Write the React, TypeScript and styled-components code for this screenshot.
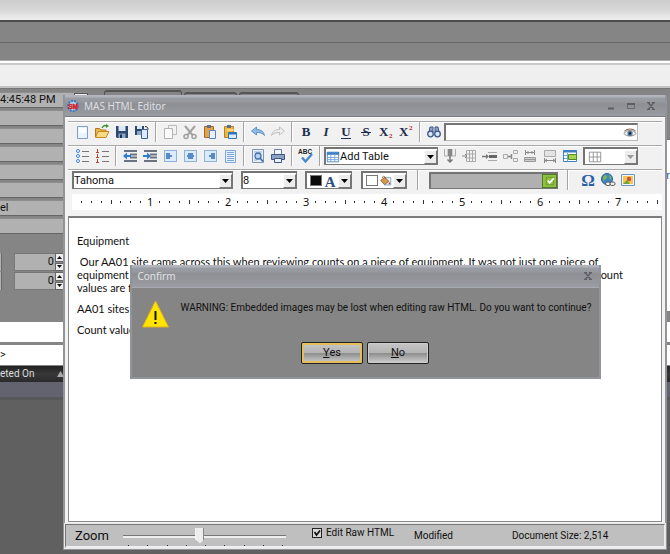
import React from "react";
import styled, { createGlobalStyle, css } from "styled-components";

const Global = createGlobalStyle`
  * { box-sizing: border-box; }
  html, body, #root { height: 100%; }
  body {
    margin: 0;
    overflow: hidden;
    font: 11px/16px Roboto, "Noto Sans", sans-serif;
    color: #111;
    background: #606060;
  }
  button, input, select { font: inherit; color: inherit; margin: 0; padding: 0; }
  p { margin: 0; }
`;

/* ---------- application behind the editor ---------- */

const Screen = styled.div`
  position: relative;
  height: 100%;
  min-height: 554px;
  overflow: hidden;
  display: flex;
  flex-direction: column;
  background: #858585;
`;
const TopStrip = styled.div`
  height: 22px;
  background: linear-gradient(#cdcdcd, #d8d8d8 50%, #efefef);
  border-bottom: 2px solid #4c4c4c;
`;
const GreyBand = styled.div<{ $line?: boolean }>`
  height: ${(p) => (p.$line ? 21 : 18)}px;
  background: #858585;
  border-bottom: 1px solid ${(p) => (p.$line ? "#646464" : "#b0b0b0")};
`;
const LightBand = styled.div`
  height: 27px;
  background: #efefef;
  border-top: 2px solid #fdfdfd;
  border-bottom: 2px solid #c3c3c3;
  box-shadow: inset 0 2px #c9c9c9;
`;
const Middle = styled.div`
  height: 234px;
  display: flex;
  gap: 16px;
  border-top: 1px solid #767676;
`;
const FieldColumn = styled.div`
  width: 88px;
  padding-top: 3px;
  display: flex;
  flex-direction: column;
  gap: 3px;
`;
const DarkField = styled.div`
  height: 15px;
  background: #b1b1b1;
  border-top: 1px solid #8e8e8e;
  box-shadow: 0 1px #666;
  line-height: 14px;
  white-space: nowrap;
  display: flex;
  justify-content: space-between;
`;
const DropTip = styled.span`
  width: 14px;
  background: #eee;
  border: 1px solid #555;
`;
const SpinRow = styled.div<{ $first?: boolean }>`
  margin-top: ${(p) => (p.$first ? 17 : 0)}px;
  height: 16px;
  display: grid;
  grid-template-columns: 2px 41px 10px;
`;
const SpinEdge = styled.span`
  background: #b1b1b1;
  border-right: 1px solid #6a6a6a;
`;
const SpinField = styled.input`
  width: 41px;
  margin-left: 12px;
  border: 1px solid #777;
  border-right: 0;
  background: #b1b1b1;
  text-align: right;
  padding-right: 1px;
`;
const SpinButtons = styled.span`
  width: 9px;
  margin-left: 12px;
  display: grid;
  grid-template-rows: 1fr 1fr;
  row-gap: 1px;
  button { background: #eee; border: 1px solid #666; display: grid; place-items: center; }
`;
const Behind = styled.div`
  flex: 1;
  display: flex;
  flex-direction: column;
`;
const Tabs = styled.div`
  height: 50px;
  display: flex;
  align-items: flex-start;
  gap: 2px;
  padding-top: 1px;
`;
const TabTop = styled.div<{ $w: number; $low?: boolean }>`
  width: ${(p) => p.$w}px;
  height: 20px;
  margin-top: ${(p) => (p.$low ? 2 : 0)}px;
  border: 2px solid #555;
  border-width: 2px 1px 1px;
  border-radius: 3px 3px 0 0;
`;
const WhitePanel = styled.div`
  height: 172px;
  background: #fff;
  border-top: 1px solid #777;
  text-align: right;
  color: #2b62a0;
  padding-top: 28px;
`;
const WhiteRow = styled.div`
  height: 20px;
  margin-bottom: 3px;
  background: #fff;
  line-height: 20px;
`;
const GridHead = styled.div`
  height: 16px;
  margin-top: -2px;
  padding-right: calc(100% - 64px);
  display: flex;
  align-items: center;
  justify-content: space-between;
  background: linear-gradient(#222, #383838 50%, #2a2a2a);
  color: #ddd;
  font-size: 10px;
`;
const GridRow = styled.div`
  height: 16px;
  background: #62636e;
  border-bottom: 1px solid #55565e;
`;
const GridRest = styled.div`
  flex: 1;
  background: #606060;
  border-top: 2px solid #585858;
`;

/* ---------- editor window ---------- */

const EditorWindow = styled.section`
  position: absolute;
  top: 95px;
  left: 63px;
  right: 3px;
  bottom: 4px;
  display: flex;
  flex-direction: column;
  background: #919499;
  border: 2px solid #919499;
  border-top: 0;
`;
const titleFill = css`
  background: linear-gradient(#b4b6bf 0, #b0b2bb 2px, #9b9da4 3px, #96989e 7px, #8d8f94 9px, #9b9da4 22px);
`;
const TitleBar = styled.header`
  ${titleFill}
  height: 22px;
  flex: none;
  display: flex;
  align-items: center;
  padding: 0 6px 0 1px;
  gap: 4px;
  color: #dedfe2;
  border-bottom: 1px solid #777a80;
`;
const WindowTitle = styled.h1`
  flex: 1;
  margin: 0;
  font: 400 10px/16px "Noto Sans", sans-serif;
`;
const CaptionButton = styled.button`
  width: 16px;
  height: 16px;
  flex: none;
  border: 0;
  background: none;
  display: grid;
  place-items: center;
`;
const Body = styled.div`
  flex: 1;
  min-height: 0;
  display: flex;
  flex-direction: column;
  background: #f3f3f3;
  border-top: 1px solid #fff;
  padding: 3px 3px 2px;
`;
const Toolbar = styled.div`
  height: 24px;
  flex: none;
  display: flex;
  align-items: center;
  padding: 0 0 3px 4px;
  border-top: 1px solid #a9a9a9;
  box-shadow: inset 0 1px #fff;
  background: #f1f1f1;
`;
const ToolButton = styled.button`
  width: 20px;
  height: 20px;
  flex: none;
  border: 0;
  background: none;
  display: grid;
  place-items: center;
`;
const Divider = styled.span`
  width: 2px;
  height: 20px;
  flex: none;
  margin: 0 3px;
  background: #a3a3a3;
  border-right: 1px solid #fff;
`;
const Gap = styled.span<{ $w: number }>`
  width: ${(p) => p.$w}px;
  flex: none;
`;
const sunken = css`
  border: 1px solid #b8b8b8;
  border-top: 2px solid #747474;
  border-left: 2px solid #747474;
  background: #fff;
`;
const SearchBox = styled.label`
  ${sunken}
  width: 194px;
  height: 18px;
  display: flex;
  align-items: center;
  input { flex: 1; min-width: 0; border: 0; background: none; outline: 0; }
`;
const Combo = styled.span<{ $w: number }>`
  ${sunken}
  border-right: 1px solid #777;
  border-bottom: 1px solid #777;
  width: ${(p) => p.$w}px;
  height: 18px;
  flex: none;
  display: flex;
  align-items: center;
  select {
    flex: 1;
    min-width: 0;
    height: 15px;
    line-height: 15px;
    border: 0;
    outline: 0;
    background: none;
    appearance: none;
    font-size: 11px;
  }
`;
const ComboArrow = styled.span`
  width: 13px;
  height: 14px;
  flex: none;
  background: #ececec;
  border: 1px solid #fff;
  border-right-color: #777;
  border-bottom-color: #777;
  display: grid;
  place-items: center;
`;
const ColourCombo = styled.button<{ $w: number }>`
  ${sunken}
  border-right: 1px solid #777;
  border-bottom: 1px solid #777;
  width: ${(p) => p.$w}px;
  height: 18px;
  flex: none;
  display: flex;
  align-items: center;
  gap: 1px;
  padding-left: 3px;
  ${ComboArrow} { margin-left: auto; }
`;
const Swatch = styled.span<{ $c: string }>`
  width: 12px;
  height: 11px;
  flex: none;
  background: ${(p) => p.$c};
  border: 1px solid #777;
`;
const Disabled = styled.div`
  ${sunken}
  border-right: 1px solid #777;
  border-bottom: 1px solid #777;
  background: #b0b0b0;
  width: 129px;
  height: 17px;
  display: flex;
  justify-content: flex-end;
  button { width: 15px; height: 14px; border: 1px solid #4f7c25; background: #8fc241; display: grid; place-items: center; }
`;
const Ruler = styled.div`
  height: 16px;
  flex: none;
  margin: 1px 0 6px 4px;
  padding-left: 5px;
  background: #fff;
  display: flex;
  overflow: hidden;
`;
const Inch = styled.div`
  width: 78px;
  flex: none;
  display: grid;
  grid-template-columns: repeat(8, 1fr);
  place-items: center;
  font: 11px/16px "Noto Sans", sans-serif;
`;
const Tick = styled.i<{ $tall: boolean }>`
  width: 1px;
  height: ${(p) => (p.$tall ? 4 : 2)}px;
  background: #333;
`;
const Page = styled.article`
  flex: 1;
  min-height: 0;
  padding: 16px 8px;
  background: #fff;
  border: 1px solid #8a8a8a;
  border-top: 2px solid #7c7c7c;
  font: 11px/13px Lato, "Noto Sans", sans-serif;
  color: #111;
`;
const Para = styled.p`
  margin-bottom: 8px;
`;
const SplitLine = styled.span`
  display: flex;
  justify-content: space-between;
  padding-right: 30px;
`;
const StatusBar = styled.footer`
  height: 24px;
  flex: none;
  display: grid;
  grid-template-columns: 57px 163px 17px 102px 98px 1fr;
  align-items: center;
  padding-left: 9px;
  background: #bfbfbf;
  border: 1px solid #777;
  border-right-color: #eee;
  border-bottom: 2px solid #eee;
  outline: 1px solid #e8e8e8;
  font-size: 10px;
`;
const ZoomLabel = styled.label`
  font-size: 13px;
  line-height: 18px;
`;
const ZoomTrack = styled.span`
  grid-column: 2;
  height: 20px;
  display: flex;
  flex-direction: column;
  justify-content: space-between;
`;
const Range = styled.input`
  appearance: none;
  width: 100%;
  height: 17px;
  margin: 2px 0 0 -9px;
  background: none;
  &::-webkit-slider-runnable-track {
    height: 3px;
    background: #777;
    border-bottom: 2px solid #eee;
  }
  &::-webkit-slider-thumb {
    appearance: none;
    width: 9px;
    height: 16px;
    margin-top: -7px;
    background: #ededed;
    border-left: 1px solid #fff;
    border-right: 1px solid #888;
    clip-path: polygon(0 0, 100% 0, 100% 75%, 50% 100%, 0 75%);
  }
`;
const Notches = styled.span`
  display: flex;
  justify-content: space-between;
  padding-right: 12px;
  margin-left: -4px;
  i { width: 1px; height: 1px; background: #333; }
`;
const Check = styled.label`
  grid-column: 4;
  display: flex;
  align-items: center;
  gap: 4px;
  margin-bottom: 5px;
  white-space: nowrap;
  input {
    appearance: none;
    width: 10px;
    height: 10px;
    border: 1px solid #222;
    background: #d8d8d8 url("data:image/svg+xml,%3Csvg xmlns='http://www.w3.org/2000/svg' viewBox='0 0 8 8'%3E%3Cpath d='M1.5 3l2 3L7 1.5' fill='none' stroke='%23111' stroke-width='1.7'/%3E%3C/svg%3E");
  }
`;

/* ---------- confirm dialog ---------- */

const Overlay = styled.div`
  position: absolute;
  top: 170px;
  left: 0;
  right: 0;
  display: flex;
  justify-content: center;
`;
const Dialog = styled.div`
  width: 471px;
  background: #858585;
  border: 2px solid #919499;
  border-top: 0;
`;
const DialogTitle = styled.header`
  ${titleFill}
  height: 23px;
  display: flex;
  align-items: center;
  padding: 0 3px 0 6px;
  color: #e2e3e6;
  border-bottom: 1px solid #a7aab1;
  h2 { flex: 1; margin: 0; font: 400 10px/16px "Noto Sans", sans-serif; }
`;
const Message = styled.div`
  display: flex;
  gap: 12px;
  padding: 12px 0 0 10px;
  height: 54px;
  font-size: 10px;
  p { white-space: nowrap; }
  svg { flex: none; }
`;
const Actions = styled.div`
  display: flex;
  justify-content: center;
  gap: 4px;
  padding-bottom: 13px;
`;
const ActionButton = styled.button<{ $focus?: boolean }>`
  width: 62px;
  height: 22px;
  border: 1px solid #222;
  border-radius: 2px;
  background: linear-gradient(#c6c6c6, #b4b4b4 48%, #8e8e8e 52%, #cfcfcf);
  box-shadow: inset 0 0 0 ${(p) => (p.$focus ? "2px #e3bf5c" : "1px #ccc")};
  line-height: 14px;
`;

/* ---------- drawings ---------- */

const Svg = ({ children, size = 16 }: { children: React.ReactNode; size?: number }) => (
  <svg width={size} height={size} viewBox="0 0 16 16" fill="none" aria-hidden="true">
    {children}
  </svg>
);

const lines = (x: number, w: number, c: string) =>
  [4, 6, 8, 10, 12].map((y) => <path key={y} d={`M${x} ${y}.5h${w}`} stroke={c} />);

const alignIcon = (d: string) => (
  <>
    <rect x="2.5" y="2.5" width="12" height="11" fill="#dcebfb" stroke="#8fb3dd" />
    <path d={d} stroke="#2d6bb3" strokeWidth="1.4" />
  </>
);

const letter = (t: string, extra?: React.ReactNode, style?: "italic") => (
  <>
    <text x="8" y="12" textAnchor="middle" fontFamily="Liberation Serif, serif" fontWeight="700" fontStyle={style} fontSize="13" fill="#1f2d4f">
      {t}
    </text>
    {extra}
  </>
);

const scriptX = (y: number) => (
  <>
    <text x="1" y="12" fontFamily="Liberation Serif, serif" fontWeight="700" fontSize="13" fill="#1f2d4f">X</text>
    <text x="11" y={y} fontFamily="Liberation Serif, serif" fontWeight="700" fontSize="7" fill="#c22">2</text>
  </>
);

const indent = (arrow: string) => (
  <>
    <path d="M2 3h13M8 6.500h7M8 9.500h7M2 13h13" stroke="#6b7280" strokeWidth="2" />
    <path d={arrow} fill="#2f7dd0" />
  </>
);

const icons: Record<string, React.ReactNode> = {
  New: <><path d="M3.500 2.500h10v12h-10z" fill="#eaf3fe" stroke="#7f9fca" /><path d="M5 4h7v5H5z" fill="#fbfdff" /></>,
  Open: <><path d="M1.500 13V4.500h4l1.500 1.500h5v2" fill="#e9b64a" stroke="#b37a1c" /><path d="M1.500 13.500l2.500-6h11l-3 6z" fill="#fbd981" stroke="#c58b28" /><path d="M8 4c1-2 3-3 5-2" stroke="#3a8f2e" strokeWidth="1.300" /><path d="M12 0l3 2-3 2z" fill="#3a8f2e" /></>,
  Save: <><path d="M2 2h12v12H3l-1-1z" fill="#2c4770" /><path d="M4.500 2h7v5h-7z" fill="#dbe8f6" /><path d="M4.500 9.500h7V14h-7z" fill="#8fa5c4" /><path d="M6 10.500h2V14H6z" fill="#1c2f50" /></>,
  SaveAs: <><path d="M1 2h9v9H1z" fill="#2c4770" /><path d="M3 2h5v3H3z" fill="#dbe8f6" /><path d="M3 7h4v4H3z" fill="#8fa5c4" /><path d="M7.500 5.500h6v9h-6z" fill="#dcebfb" stroke="#3a62a0" /><path d="M11 2.500c2 0 3 1 3 3" stroke="#222" /></>,
  Copy: <><path d="M6.500 1.500h8v9h-8z" fill="#f3f3f3" stroke="#bbb" /><path d="M2.500 4.500h8v10h-8z" fill="#fafafa" stroke="#b3b3b3" /></>,
  Cut: <><path d="M3 2l7.500 9M13 2L5.500 11" stroke="#a2a2a2" strokeWidth="2" /><circle cx="4" cy="12.500" r="2" stroke="#a2a2a2" strokeWidth="1.500" /><circle cx="12" cy="12.500" r="2" stroke="#a2a2a2" strokeWidth="1.500" /></>,
  Paste: <><path d="M2.500 2.500h9v11h-9z" fill="#e3a24e" stroke="#a8682a" /><path d="M5 1h4v3H5z" fill="#5c6f8a" /><path d="M7.500 6.500h6v8h-6z" fill="#eaf3fd" stroke="#5b85bf" /></>,
  PasteSpecial: <><path d="M2.500 2.500h9v11h-9z" fill="#f0b83e" stroke="#b9822a" /><path d="M5 1h4v3H5z" fill="#5c6f8a" /><path d="M5 6h7" stroke="#fff0b8" /><path d="M6.500 8.500h8v6h-8z" fill="#dcebfb" stroke="#2f74bd" /><path d="M7 9.500h7" stroke="#2f74bd" strokeWidth="2" /></>,
  Undo: <path d="M1.500 7L6.500 3v2.500c4 0 7 1.500 8 6-2-2.500-4.500-3-8-3V11z" fill="#8fbbe6" stroke="#4b83bd" strokeWidth=".8" />,
  Redo: <path d="M14.500 7L9.500 3v2.500c-4 0-7 1.500-8 6 2-2.500 4.500-3 8-3V11z" fill="#eee" stroke="#b5b5b5" strokeWidth=".8" />,
  Bold: letter("B"),
  Italic: letter("I", undefined, "italic"),
  Underline: letter("U", <path d="M3 14.500h10" stroke="#1f2d4f" />),
  Strike: letter("S", <path d="M3 8.500h10" stroke="#1f2d4f" />),
  Subscript: scriptX(14),
  Superscript: scriptX(6),
  Find: <><path d="M4 3h3v5H3zM9 3h3l1 5H9z" fill="#8fa5c8" stroke="#3d5687" /><circle cx="4.500" cy="10" r="2.800" fill="#d9e8fb" stroke="#3d5687" strokeWidth="1.300" /><circle cx="11.500" cy="10" r="2.800" fill="#d9e8fb" stroke="#3d5687" strokeWidth="1.300" /></>,
  Bullets: <>{[3.5, 8.5, 13.5].map((y) => <g key={y}><circle cx="4" cy={y - 0.5} r="1.500" fill="#fff" stroke="#3b86cf" /><path d={`M8 ${y}h7`} stroke="#777" /></g>)}</>,
  Numbers: <>{[3.5, 8.5, 13.5].map((y) => <g key={y}><path d={`M3.500 ${y - 2.5}v3M2 ${y + 1}h3`} stroke="#b7422c" /><path d={`M8 ${y}h7`} stroke="#777" /></g>)}</>,
  Outdent: indent("M1 8l4-3.500v2.500h4v2H5v2.500z"),
  Indent: indent("M9 8L5 4.500v2.500H1v2h4v2.500z"),
  AlignLeft: alignIcon("M4 6h4M4 8h6M4 10h4"),
  AlignCenter: alignIcon("M6 6h5M5 8h7M6 10h5"),
  AlignRight: alignIcon("M9 6h4M7 8h6M9 10h4"),
  Justify: <><path d="M3.500 2.500h10v12h-10z" fill="#e4effb" stroke="#7fa8d8" />{lines(5, 7, "#7fa8d8")}</>,
  Preview: <><path d="M2.500 1.500h11v13h-11z" fill="#e7f0fa" stroke="#7b95b8" /><path d="M4 4h8M4 12h3" stroke="#9db6d6" /><circle cx="8" cy="8" r="3" fill="#b7d5f3" stroke="#436fa8" strokeWidth="1.300" /><path d="M10 10l3 3.500" stroke="#436fa8" strokeWidth="1.800" /></>,
  Print: <><path d="M4.500 1.500h7v5h-7z" fill="#f2f7fd" stroke="#6580a8" /><path d="M1.500 6.500h13v5h-13z" fill="#8ba2c4" stroke="#3d5687" /><path d="M4.500 10.500h7v4h-7z" fill="#eaf3fd" stroke="#3d5687" /></>,
  Spelling: <><text x="0" y="6" fontFamily="Liberation Sans, sans-serif" fontWeight="700" fontSize="6.500" fill="#222">ABC</text><path d="M4 9.500l3.500 4L14 6" stroke="#4889cc" strokeWidth="2.400" /></>,
  Table: <><path d="M1.500 2.500h13v11h-13z" fill="#fff" stroke="#3f7fc4" /><path d="M1 4h14" stroke="#3f7fc4" strokeWidth="3" /><path d="M2 8.500h12M2 11h12M5.500 5v8M10 5v8" stroke="#6fa4dc" /></>,
  RowDown: <><path d="M2.500 1v7h11V1M6 1v7M10 1v7" stroke="#aaa" /><path d="M6 1h4v7H6z" fill="#888" /><path d="M8 8v6M5.500 11.500L8 14l2.500-2.500" stroke="#777" strokeWidth="1.500" /></>,
  ColLeft: <><path d="M4.500 2.500h9v11h-9zM7.500 2v12M10.500 2v12M4 6h10M4 10h10" stroke="#aaa" /><path d="M0 8h5M3 6l2 2-2 2" stroke="#888" /></>,
  RowInsert: <><path d="M6 4.500h9M6 12.500h9" stroke="#aaa" /><path d="M7 7h8v3H7z" fill="#666" /><path d="M0 8.500h6" stroke="#777" strokeWidth="1.500" /><path d="M4 6l3 2.500L4 11z" fill="#777" /></>,
  Split: <><path d="M1.500 6.500h4v4h-4zM11.500 2.500h4v3h-4zM11.500 10.500h4v3h-4z" stroke="#aaa" /><path d="M6 8.500h3M9.500 6v5" stroke="#888" strokeWidth="1.500" /></>,
  FitContent: <><path d="M3.500 2v5M12.500 2v5M4 4.500h8M6.500 3L5 4.500 6.500 6M9.500 3L11 4.500 9.500 6" stroke="#8a8a8a" /><path d="M2.500 9.500h11v4h-11z" fill="#ccc" stroke="#999" /><path d="M2 11.500h12" stroke="#999" /></>,
  FitWindow: <><path d="M2.500 2.500h11v6h-11z" fill="#e3e3e3" stroke="#aaa" /><path d="M2.500 10v5M13.500 10v5M3 12.500h10M5 11l-2 1.500L5 14M11 11l2 1.500-2 1.500" stroke="#8a8a8a" /></>,
  TableProps: <><path d="M1.500 2.500h13v11h-13z" fill="#fff" stroke="#3f7fc4" /><path d="M1 3.500h14" stroke="#3f7fc4" strokeWidth="2" /><path d="M2 7.500h12M2 10.500h12M5.500 5v8" stroke="#6fa4dc" /><path d="M6.500 6.500h8v5h-8z" fill="#a8d34c" stroke="#4f8a28" /></>,
  Borders: <path d="M1.500 2.500h13v11h-13zM1.500 8h13M6 2.500v11M10.500 2.500v11" stroke="#8e8e8e" />,
  Eye: <><path d="M1 8.500C4 4 12 4 15 8.500 12 12.500 4 12.500 1 8.500z" fill="#f5f8fb" stroke="#8d7a70" /><path d="M1.500 6C5 2.500 11 2.500 14.500 6" stroke="#8a6a58" strokeWidth="1.200" /><circle cx="8" cy="8.500" r="3" fill="#4c7eb0" /><circle cx="8" cy="8.500" r="1.300" fill="#111" /></>,
  FontColour: <text x="8" y="15" textAnchor="middle" fontFamily="Liberation Serif, serif" fontSize="17" fontWeight="700" fill="#2a4f86">A</text>,
  Fill: <><path d="M6.500 4.500h8v9h-8z" fill="#eef5fd" stroke="#6f94c6" /><path d="M2 8l5-4 5 5-5 4z" fill="#d79a4c" stroke="#8a5a22" /><path d="M4 5c0-3 4-3 4 1" stroke="#8a5a22" /><path d="M12 9l2 3-2 1z" fill="#c0392b" /></>,
  Symbol: <text x="8" y="14" textAnchor="middle" fontFamily="Liberation Serif, serif" fontSize="17" fontWeight="700" fill="#2b5fa5">Ω</text>,
  Link: <><circle cx="7" cy="7" r="5.500" fill="#3f86c9" stroke="#2a5f98" /><path d="M3 5c2-3 4-2 4 0S4 8 3 9zM9 3c3 1 3 4 1 5z" fill="#79b94a" /><rect x="5.500" y="10" width="5" height="3.500" rx="1.700" fill="#eee" stroke="#555" /><rect x="10" y="10" width="5" height="3.500" rx="1.700" fill="#eee" stroke="#555" /></>,
  Image: <><path d="M1.500 2.500h13v11h-13z" fill="#f3f7fc" stroke="#6f94c6" /><path d="M3 4h10v8H3z" fill="#f7c453" /><circle cx="9" cy="7" r="2.200" fill="#c9553a" /><path d="M3 12l4-4 3 4z" fill="#6ba53c" /></>,
  Ok: <><path d="M3 3h10v10H3z" stroke="#5f8f2b" /><path d="M5 7.500l2.500 3L13 4.500" stroke="#fff" strokeWidth="2.200" /></>,
};

const Icon = ({ name, size }: { name: string; size?: number }) => <Svg size={size}>{icons[name]}</Svg>;

const Arrow = ({ faded }: { faded?: boolean }) => (
  <ComboArrow>
    <svg width="7" height="4" viewBox="0 0 7 4" aria-hidden="true">
      <path d="M0 0h7L3.500 4z" fill={faded ? "#999" : "#000"} />
    </svg>
  </ComboArrow>
);

const Tools = ({ names }: { names: string[] }) => (
  <>
    {names.map((n) => (
      <ToolButton key={n} aria-label={n}>
        <Icon name={n} />
      </ToolButton>
    ))}
  </>
);

const CloseGlyph = () => (
  <svg width="8" height="8" viewBox="0 0 8 8" aria-hidden="true">
    <path d="M0 .5h3M5 .5h3M0 7.500h3M5 7.500h3M1.500 1l5 6M6.500 1l-5 6" stroke="#5c5e62" strokeWidth="1.300" />
  </svg>
);

const Spin = ({ first }: { first?: boolean }) => (
  <SpinRow $first={first}>
    <SpinEdge />
    <SpinField defaultValue="0" aria-label="Amount" />
    <SpinButtons>
      <button aria-label="Increase"><svg width="5" height="3" viewBox="0 0 5 3"><path d="M0 3h5L2.500 0z" fill="#111" /></svg></button>
      <button aria-label="Decrease"><svg width="5" height="3" viewBox="0 0 5 3"><path d="M0 0h5L2.500 3z" fill="#111" /></svg></button>
    </SpinButtons>
  </SpinRow>
);

const Application = () => (
  <>
    <TopStrip />
    <GreyBand $line />
    <GreyBand />
    <LightBand />
    <Middle>
      <FieldColumn>
        <DarkField>4:45:48 PM<DropTip /></DarkField>
        {["", "", "", "", "", "el", ""].map((t, i) => (
          <DarkField key={i}>{t}</DarkField>
        ))}
        <Spin first />
        <Spin />
      </FieldColumn>
      <Behind>
        <Tabs>
          <TabTop $w={78} />
          <TabTop $w={53} $low />
          <TabTop $w={60} $low />
        </Tabs>
        <WhitePanel>r</WhitePanel>
      </Behind>
    </Middle>
    <WhiteRow />
    <WhiteRow>&gt;</WhiteRow>
    <GridHead>
      <span>eted On</span>
      <svg width="7" height="6" viewBox="0 0 7 6" aria-hidden="true"><path d="M0 6h7L3.500 0z" fill="#aaa" /></svg>
    </GridHead>
    <GridRow />
    <GridRest />
  </>
);

const ConfirmDialog = () => (
  <Overlay>
    <Dialog role="dialog" aria-labelledby="confirm-title">
      <DialogTitle>
        <h2 id="confirm-title">Confirm</h2>
        <CaptionButton aria-label="Close"><CloseGlyph /></CaptionButton>
      </DialogTitle>
      <Message>
        <svg width="27" height="28" viewBox="0 0 27 28" aria-hidden="true">
          <path d="M13.500 1L26.500 27H.5z" fill="#ffe400" stroke="#e0b21c" />
          <path d="M13.500 11v9M13.500 22v2" stroke="#111" strokeWidth="2" />
        </svg>
        <p>WARNING: Embedded images may be lost when editing raw HTML. Do you want to continue?</p>
      </Message>
      <Actions>
        <ActionButton $focus><u>Y</u>es</ActionButton>
        <ActionButton><u>N</u>o</ActionButton>
      </Actions>
    </Dialog>
  </Overlay>
);

export default function App() {
  return (
    <Screen>
      <Global />
      <Application />
      <EditorWindow>
        <TitleBar>
          <svg width="14" height="14" viewBox="0 0 14 14" aria-hidden="true">
            <circle cx="7" cy="7" r="5" fill="#bfd2e8" stroke="#3b78bf" strokeWidth="2" strokeDasharray="2 1" />
            <text x="7" y="9.500" textAnchor="middle" fontFamily="Liberation Sans, sans-serif" fontWeight="700" fontSize="6.500" fill="#d5222c" stroke="#d5222c" strokeWidth=".5">SM</text>
          </svg>
          <WindowTitle>MAS HTML Editor</WindowTitle>
          <CaptionButton aria-label="Minimize"><svg width="6" height="8" viewBox="0 0 6 8"><path d="M0 6.500h6" stroke="#5c5e62" strokeWidth="2" /></svg></CaptionButton>
          <CaptionButton aria-label="Maximize"><svg width="8" height="8" viewBox="0 0 8 8"><path d="M.5 1.500h7v5h-7z" fill="none" stroke="#66686c" /><path d="M0 2h8" stroke="#5c5e62" strokeWidth="2" /></svg></CaptionButton>
          <CaptionButton aria-label="Close"><CloseGlyph /></CaptionButton>
        </TitleBar>
        <Body>
          <Toolbar>
            <Tools names={["New", "Open", "Save", "SaveAs"]} />
            <Divider />
            <Tools names={["Copy", "Cut", "Paste", "PasteSpecial"]} />
            <Divider />
            <Tools names={["Undo", "Redo"]} />
            <Divider />
            <Tools names={["Bold", "Italic", "Underline", "Strike", "Subscript", "Superscript"]} />
            <Divider />
            <Tools names={["Find"]} />
            <SearchBox>
              <input type="text" aria-label="Find text" />
              <Icon name="Eye" size={14} />
            </SearchBox>
          </Toolbar>
          <Toolbar>
            <Tools names={["Bullets", "Numbers"]} />
            <Divider />
            <Tools names={["Outdent", "Indent", "AlignLeft", "AlignCenter", "AlignRight", "Justify"]} />
            <Divider />
            <Tools names={["Preview", "Print"]} />
            <Divider />
            <Tools names={["Spelling"]} />
            <Divider />
            <Combo $w={114}>
              <Icon name="Table" size={14} />
              <select aria-label="Table"><option>Add Table</option></select>
              <Arrow />
            </Combo>
            <Gap $w={2} />
            <Tools names={["RowDown", "ColLeft", "RowInsert", "Split", "FitContent", "FitWindow", "TableProps"]} />
            <Gap $w={3} />
            <ColourCombo $w={55} aria-label="Borders">
              <Icon name="Borders" size={14} />
              <Arrow faded />
            </ColourCombo>
          </Toolbar>
          <Toolbar>
            <Combo $w={161}>
              <select aria-label="Font"><option>Tahoma</option></select>
              <Arrow />
            </Combo>
            <Gap $w={8} />
            <Combo $w={56}>
              <select aria-label="Font size"><option>8</option></select>
              <Arrow />
            </Combo>
            <Gap $w={8} />
            <ColourCombo $w={47} aria-label="Font colour">
              <Swatch $c="#0a0a0a" />
              <Icon name="FontColour" size={14} />
              <Arrow />
            </ColourCombo>
            <Gap $w={9} />
            <ColourCombo $w={46} aria-label="Fill colour">
              <Swatch $c="#fff" />
              <Icon name="Fill" size={13} />
              <Arrow />
            </ColourCombo>
            <Gap $w={7} />
            <Divider />
            <Gap $w={7} />
            <Disabled>
              <button aria-label="Apply"><Icon name="Ok" size={12} /></button>
            </Disabled>
            <Gap $w={6} />
            <Divider />
            <Gap $w={6} />
            <Tools names={["Symbol", "Link", "Image"]} />
          </Toolbar>
          <Ruler>
            {[1, 2, 3, 4, 5, 6, 7, 8].map((n) => (
              <Inch key={n}>
                {[1, 2, 3, 4, 5, 6, 7].map((k) => <Tick key={k} $tall={k === 4} />)}
                {n < 8 && <span>{n}</span>}
              </Inch>
            ))}
          </Ruler>
          <Page>
            <Para>Equipment</Para>
            <Para>
              &nbsp;Our AA01 site came across this when reviewing counts on a piece of equipment. It was not just one piece of
              <SplitLine><span>equipment</span><span>ount</span></SplitLine>
              values are f
            </Para>
            <Para>AA01 sites</Para>
            <Para>Count value</Para>
          </Page>
        </Body>
        <StatusBar>
          <ZoomLabel htmlFor="zoom">Zoom</ZoomLabel>
          <ZoomTrack>
            <Range id="zoom" type="range" min="0" max="100" defaultValue="47" />
            <Notches>{[0, 1, 2, 3, 4, 5, 6, 7, 8].map((n) => <i key={n} />)}</Notches>
          </ZoomTrack>
          <Check><input type="checkbox" defaultChecked />Edit Raw HTML</Check>
          <span>Modified</span>
          <span>Document Size: 2,514</span>
        </StatusBar>
        <ConfirmDialog />
      </EditorWindow>
    </Screen>
  );
}
